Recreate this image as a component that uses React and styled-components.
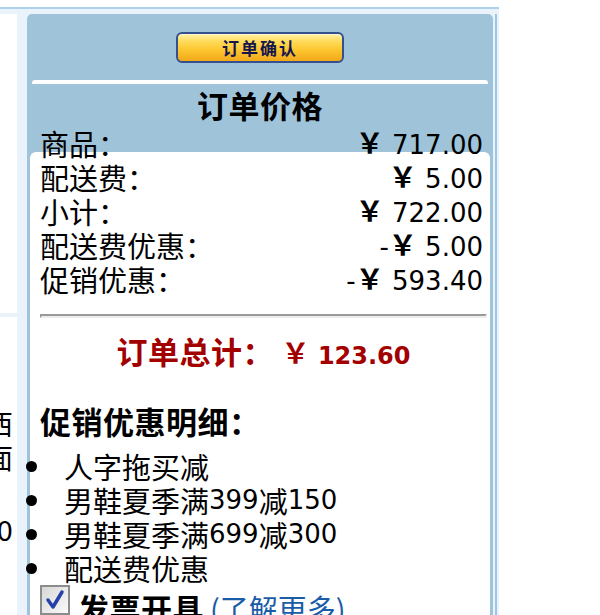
import styled, { createGlobalStyle } from 'styled-components';

const GlobalStyle = createGlobalStyle`
  html, body {
    margin: 0;
    padding: 0;
    background: #fff;
  }
  body {
    font-family: "Noto Sans CJK SC", sans-serif;
    font-size: 29px;
    color: #000;
  }
`;

const Frame = styled.div`
  margin-top: 7px;
  width: 499px;
  height: 608px;
  box-sizing: border-box;
  border-top: 2px solid #acd2ee;
  padding-top: 5px;
  background: #eaf3fc;
  display: flex;
  overflow: hidden;
`;

// neighbour column, only its right edge is visible
const SideColumn = styled.div`
  flex: none;
  width: 17px;
  background: #fff;
  overflow: hidden;
  display: flex;
  flex-direction: column;
`;

const SideBox = styled.div`
  flex: none;
  height: 299px;
  border-bottom: 4px solid #eaf3fc;
`;

const ClippedLine = styled.div`
  flex: none;
  display: flex;
  justify-content: flex-end;
  white-space: nowrap;
  line-height: 34px;
  margin-top: ${p => p.$gap || 0}px;
  margin-right: 4px;
  font-family: ${p => (p.$digits ? '"DejaVu Sans"' : '"Noto Sans CJK SC"')}, sans-serif;
  font-size: ${p => (p.$digits ? 26 : 28)}px;
`;

const Panel = styled.div`
  flex: none;
  width: 466px;
  margin-left: 10px;
  background: #9fc3d9;
  border-radius: 5px 5px 0 0;
  display: flex;
  flex-direction: column;
`;

const Rail = styled.div`
  flex: none;
  width: 2px;
  margin-left: 2px;
  background: #9cc6e4;
`;

const ActionBar = styled.div`
  flex: none;
  height: 66px;
  display: flex;
  align-items: center;
  justify-content: center;
`;

const ConfirmButton = styled.button`
  flex: none;
  width: 168px;
  height: 31px;
  padding: 0;
  border: 2px solid #34508f;
  border-radius: 6px;
  background: linear-gradient(#fff1a6 0%, #ffd955 30%, #fcc52e 60%, #f1a81a 100%);
  box-shadow: inset 0 1px 0 #fff7cc;
  color: #16164e;
  font: bold 17px "Noto Sans CJK SC", sans-serif;
  letter-spacing: 2px;
  cursor: pointer;
`;

const Divider = styled.div`
  flex: none;
  height: 4px;
  margin: 0 5px;
  background: #fff;
  border-radius: 3px 3px 0 0;
`;

const Title = styled.div`
  flex: none;
  padding-top: 4px;
  line-height: 34px;
  font-size: 31px;
  font-weight: bold;
  letter-spacing: 0.5px;
  text-align: center;
`;

const Sheet = styled.div`
  flex: 1 0 auto;
  margin: 30px 3px 0;
  padding: 0 3px 0 10px;
  background: #fff;
  border-radius: 6px 6px 0 0;
  display: flex;
  flex-direction: column;
`;

const PriceRows = styled.div`
  flex: none;
  margin-top: -26px;
  padding-right: 4px;
`;

const Row = styled.div`
  display: flex;
  justify-content: space-between;
  align-items: center;
  height: 34px;
  line-height: 34px;
  white-space: nowrap;
`;

const Amount = styled.span`
  font-family: "DejaVu Sans", sans-serif;
  font-size: ${p => (p.$bold ? 24 : 26)}px;
  font-weight: ${p => (p.$bold ? 'bold' : 'normal')};
  letter-spacing: 0;
`;

const Yen = styled.span`
  font-family: "Noto Sans CJK SC", sans-serif;
  font-size: 28px;
  font-weight: bold;
`;

const Rule = styled.div`
  flex: none;
  margin-top: 18px;
  height: 0;
  border-top: 2px solid #9a9a9a;
  border-left: 2px solid #9a9a9a;
  border-bottom: 2px solid #ececec;
  border-right: 2px solid #ececec;
`;

const Total = styled.div`
  flex: none;
  margin-top: 16px;
  line-height: 34px;
  text-align: center;
  color: #a30000;
  font-size: 31px;
  font-weight: bold;
  letter-spacing: 0.5px;
  white-space: pre;
`;

const DetailHeading = styled.div`
  flex: none;
  margin-top: 31px;
  line-height: 34px;
  font-size: 31px;
  font-weight: bold;
  letter-spacing: 0.5px;
`;

const PromoList = styled.ul`
  flex: none;
  list-style: none;
  margin: 11px 0 0 -14px;
  padding: 0;
`;

const PromoItem = styled.li`
  display: flex;
  align-items: center;
  height: 34px;
  line-height: 34px;
  white-space: nowrap;
`;

const Dot = styled.span`
  flex: none;
  width: 11px;
  height: 11px;
  margin-right: 27px;
  border-radius: 50%;
  background: #000;
`;

const Num = styled.span`
  font-family: "DejaVu Sans", sans-serif;
  font-size: 26px;
`;

const InvoiceRow = styled.div`
  flex: none;
  display: flex;
  align-items: flex-start;
  white-space: nowrap;
`;

const InvoiceLabel = styled.span`
  margin: 6px 0 0 8px;
  line-height: 34px;
  font-size: 31px;
  font-weight: bold;
  letter-spacing: 0.5px;
`;

const MoreLink = styled.a`
  margin: 6px 0 0 6px;
  line-height: 34px;
  font-size: 29px;
  color: #1a5ca8;
  text-decoration: none;
`;

const Checkbox = () => (
  <svg width="30" height="30" viewBox="0 0 30 30" style={{ flex: 'none' }}>
    <defs>
      <linearGradient id="boxFill" x1="0" y1="0" x2="1" y2="1">
        <stop offset="0" stopColor="#d6d6d6" />
        <stop offset="1" stopColor="#fbfbfb" />
      </linearGradient>
    </defs>
    <rect x="1" y="1" width="28" height="28" fill="url(#boxFill)" stroke="#8c8c8c" strokeWidth="2" />
    <path d="M8 15 L13 22 L22 7" fill="none" stroke="#2742a6" strokeWidth="3.5" strokeLinecap="round" strokeLinejoin="round" />
  </svg>
);

const Money = ({ value, minus, bold }) => (
  <Amount $bold={bold}>
    {minus ? '-' : ''}
    <Yen>￥</Yen> {value}
  </Amount>
);

const prices = [
  { label: '商品：', value: '717.00' },
  { label: '配送费：', value: '5.00' },
  { label: '小计：', value: '722.00' },
  { label: '配送费优惠：', value: '5.00', minus: true },
  { label: '促销优惠：', value: '593.40', minus: true },
];

const promos = [
  ['人字拖买减'],
  ['男鞋夏季满', '399', '减', '150'],
  ['男鞋夏季满', '699', '减', '300'],
  ['配送费优惠'],
];

export default function App() {
  return (
    <>
      <GlobalStyle />
      <Frame>
        <SideColumn>
          <SideBox />
          <ClippedLine $gap={89}>实物东西</ClippedLine>
          <ClippedLine>另一方面</ClippedLine>
          <ClippedLine $gap={41} $digits>100</ClippedLine>
        </SideColumn>

        <Panel>
          <ActionBar>
            <ConfirmButton type="button">订单确认</ConfirmButton>
          </ActionBar>
          <Divider />
          <Title>订单价格</Title>
          <Sheet>
            <PriceRows>
              {prices.map(p => (
                <Row key={p.label}>
                  <span>{p.label}</span>
                  <Money value={p.value} minus={p.minus} />
                </Row>
              ))}
            </PriceRows>
            <Rule />
            <Total>
              {'订单总计： '}
              <Money value="123.60" bold />
            </Total>
            <DetailHeading>促销优惠明细：</DetailHeading>
            <PromoList>
              {promos.map((parts, i) => (
                <PromoItem key={i}>
                  <Dot />
                  {parts.map((t, j) => (j % 2 ? <Num key={j}>{t}</Num> : <span key={j}>{t}</span>))}
                </PromoItem>
              ))}
            </PromoList>
            <InvoiceRow>
              <Checkbox />
              <InvoiceLabel>发票开具</InvoiceLabel>
              <MoreLink href="#">(了解更多)</MoreLink>
            </InvoiceRow>
          </Sheet>
        </Panel>
        <Rail />
      </Frame>
    </>
  );
}
